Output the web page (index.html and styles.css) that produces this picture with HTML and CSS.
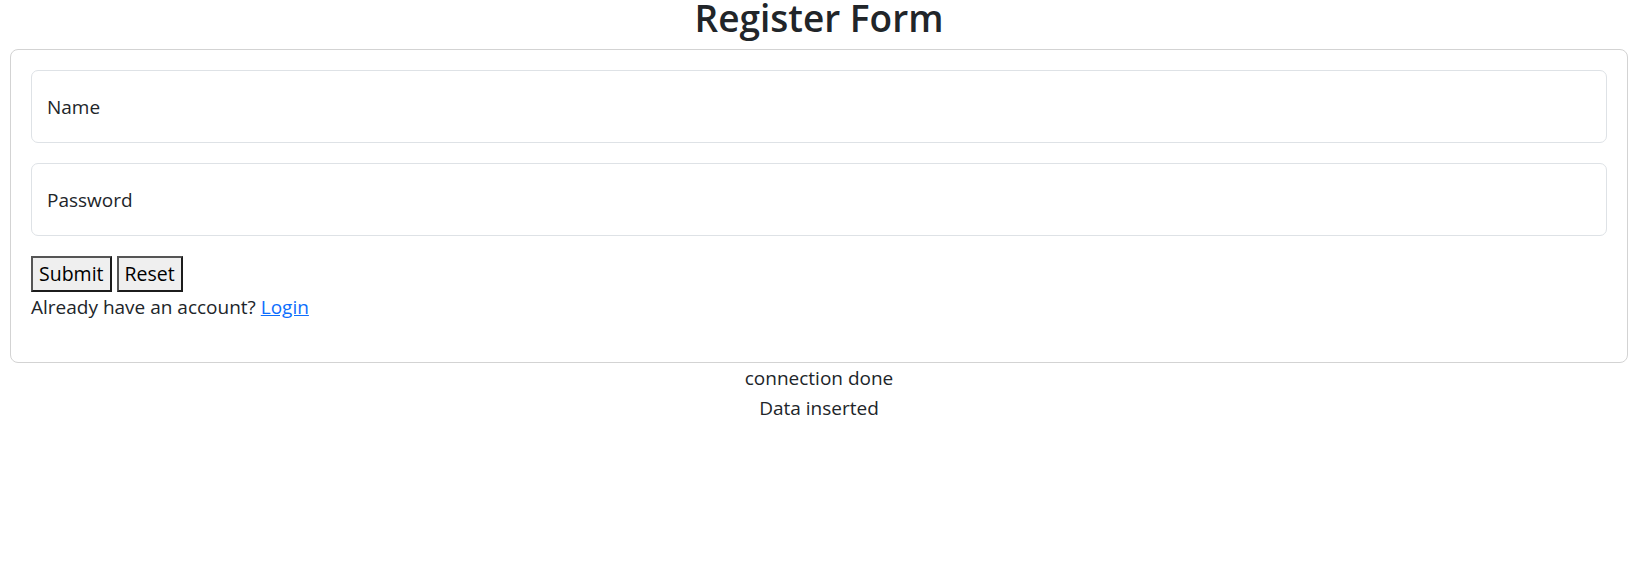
FILE: index.html
```html
<!DOCTYPE html>
<html lang="en">
<head>
<meta charset="utf-8">
<title>Register Form</title>
<link rel="stylesheet" href="styles.css">
</head>
<body>
<h2 class="title">Register Form</h2>
<div class="card">
  <form class="form">
    <div class="field"><span class="placeholder">Name</span></div>
    <div class="field"><span class="placeholder">Password</span></div>
    <div class="buttons"><button type="button" class="btn">Submit</button> <button type="button" class="btn">Reset</button></div>
    <p class="note">Already have an account? <a href="#" class="link">Login</a></p>
  </form>
</div>
<div class="status">connection done</div>
<div class="status">Data inserted</div>
</body>
</html>
```
FILE: styles.css
```css
html, body {
  margin: 0;
  padding: 0;
  background: #fff;
}
body {
  font-family: "Open Sans", "Noto Sans", sans-serif;
  font-size: 19px;
  line-height: 30px;
  color: #212529;
}
.title {
  margin: 0 0 13px;
  text-align: center;
  font-size: 37px;
  font-weight: 600;
  line-height: 36px;
  height: 36px;
}
.card {
  margin: 0 10px;
  border: 1px solid #d3d3d3;
  border-radius: 8px;
  padding: 20px;
}
.form {
  display: flex;
  flex-direction: column;
}
.field {
  box-sizing: border-box;
  height: 73px;
  border: 1px solid #dee2e6;
  border-radius: 7px;
  display: flex;
  align-items: center;
  padding: 0 15px;
  margin-bottom: 20px;
}
.placeholder {
  color: #212529;
}
.buttons {
  display: flex;
  gap: 5px;
}
.btn {
  font: inherit;
  font-size: 19.5px;
  line-height: 30px;
  color: #000;
  background: #efefef;
  border: 2px solid;
  border-color: #555 #1c1c1c #1c1c1c #555;
  border-radius: 0;
  padding: 1px 6px;
  margin: 0;
}
.note {
  margin: 0 0 20px;
}
.link {
  color: #0d6efd;
  text-decoration: underline;
}
.status {
  text-align: center;
}
```
